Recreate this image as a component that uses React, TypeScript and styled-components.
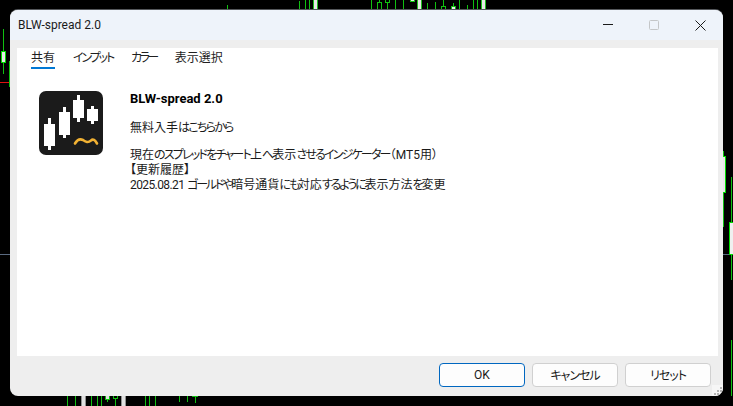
import * as React from "react";
import styled, { createGlobalStyle } from "styled-components";

const GlobalStyle = createGlobalStyle`
  html, body {
    margin: 0;
    padding: 0;
    background: #000;
    overflow: hidden;
  }
  * {
    box-sizing: border-box;
  }
`;

const fontStack = `Roboto, "Noto Sans CJK JP", sans-serif`;

const Desktop = styled.div`
  position: relative;
  width: 733px;
  height: 406px;
  background: #000;
  overflow: hidden;
  font-family: ${fontStack};
  font-feature-settings: "palt";
`;

const ChartLayer = styled.svg`
  position: absolute;
  left: 0;
  top: 0;
`;

const Window = styled.div`
  position: absolute;
  left: 10px;
  top: 10px;
  width: 713px;
  height: 386px;
  display: flex;
  flex-direction: column;
  background: #eeeeee;
  border-radius: 8px;
  overflow: hidden;
  box-shadow: 0 -1px 0 #55585c;
`;

const TitleBar = styled.div`
  height: 30px;
  flex: none;
  display: flex;
  align-items: center;
  background: #eef3fa;
  padding-left: 8px;
`;

const TitleText = styled.div`
  flex: 1;
  font-size: 12px;
  color: #1a1a1a;
`;

const WindowButton = styled.div`
  width: 46px;
  height: 30px;
  display: flex;
  align-items: center;
  justify-content: center;
`;

const Body = styled.div`
  flex: 1;
  display: flex;
  padding: 8px 5px 0 7px;
  min-height: 0;
`;

const Panel = styled.div`
  flex: 1;
  display: flex;
  flex-direction: column;
  background: #fff;
`;

const TabBar = styled.div`
  height: 22px;
  flex: none;
  display: flex;
  gap: 18px;
  padding-left: 14px;
`;

const Tab = styled.div<{ $active?: boolean }>`
  height: 21px;
  padding-top: 1px;
  font-size: 12px;
  line-height: 18px;
  color: #1f1f1f;
  border-bottom: 2px solid ${(p) => (p.$active ? "#0078d4" : "transparent")};
`;

// the kana in the reference are narrower than the kanji
const Tight = styled.span<{ $by?: number }>`
  letter-spacing: ${(p) => p.$by ?? -1.8}px;
`;

const Content = styled.div`
  flex: 1;
  display: flex;
  gap: 27px;
  padding: 21px 0 0 22px;
`;

const IconBox = styled.div`
  width: 64px;
  height: 64px;
  flex: none;
`;

const Info = styled.div`
  display: flex;
  flex-direction: column;
`;

const AppName = styled.div`
  font-size: 13px;
  font-weight: 700;
  line-height: 16px;
  color: #000;
  margin-bottom: 14px;
`;

const Line = styled.div<{ $gap?: number }>`
  font-size: 12px;
  line-height: 15px;
  color: #1a1a1a;
  margin-bottom: ${(p) => p.$gap ?? 0}px;
  white-space: nowrap;
`;

const Footer = styled.div`
  position: relative;
  height: 40px;
  flex: none;
  display: flex;
  justify-content: flex-end;
  gap: 7px;
  padding: 7px 12px 0 0;
`;

const Button = styled.button<{ $primary?: boolean }>`
  width: 86px;
  height: 24px;
  padding: 0 0 1px;
  font-family: ${fontStack};
  font-feature-settings: "palt";
  font-size: 12px;
  color: #1a1a1a;
  background: #fdfdfd;
  border-radius: 4px;
  border: ${(p) => (p.$primary ? "1.5px solid #0067c0" : "1px solid #d0d0d0")};
`;

const Grip = styled.svg`
  position: absolute;
  right: 0;
  bottom: 0;
`;

// candles behind the dialog: x, y, w, h, fill
const chartBars: [number, number, number, number, string][] = [
  [3, 29, 1, 45, "#10c010"],
  [1, 51, 5, 12, "#00e000"],
  [2, 52, 3, 10, "#e8e8e8"],
  [0, 82, 10, 1, "#e01010"],
  [9, 61, 1, 26, "#10c010"],
  [0, 254, 10, 1, "#5a6a80"],
  [227, 5, 1, 5, "#10c010"],
  [299, 1, 1, 9, "#10c010"],
  [305, 0, 1, 10, "#10c010"],
  [309, 0, 1, 10, "#10c010"],
  [313, 0, 5, 10, "#20c020"],
  [314, 0, 3, 10, "#e8e8e8"],
  [371, 0, 1, 10, "#10c010"],
  [379, 0, 1, 2, "#10c010"],
  [377, 2, 5, 8, "#10c010"],
  [378, 3, 3, 7, "#000"],
  [387, 0, 1, 9, "#10c010"],
  [385, 0, 5, 3, "#10c010"],
  [386, 0, 3, 2, "#000"],
  [395, 0, 1, 10, "#10c010"],
  [403, 0, 1, 10, "#10c010"],
  [410, 0, 5, 2, "#10c010"],
  [411, 0, 3, 1, "#e8e8e8"],
  [417, 0, 5, 10, "#20c020"],
  [418, 0, 3, 10, "#e8e8e8"],
  [427, 3, 1, 7, "#10c010"],
  [435, 2, 1, 8, "#10c010"],
  [443, 0, 1, 6, "#10c010"],
  [441, 6, 5, 4, "#10c010"],
  [442, 7, 3, 3, "#000"],
  [451, 6, 5, 4, "#10c010"],
  [452, 7, 3, 3, "#e8e8e8"],
  [453, 3, 1, 3, "#10c010"],
  [459, 0, 1, 10, "#10c010"],
  [467, 5, 1, 5, "#10c010"],
  [473, 0, 1, 10, "#10c010"],
  [477, 0, 1, 10, "#10c010"],
  [481, 0, 5, 10, "#20c020"],
  [482, 0, 3, 10, "#e8e8e8"],
  [67, 396, 1, 10, "#10c010"],
  [75, 396, 1, 10, "#10c010"],
  [81, 396, 5, 10, "#909090"],
  [82, 396, 3, 10, "#e0e0e0"],
  [91, 396, 1, 10, "#10c010"],
  [97, 396, 1, 10, "#10c010"],
  [101, 396, 1, 10, "#10c010"],
  [107, 396, 1, 6, "#10c010"],
  [105, 396, 5, 4, "#10c010"],
  [106, 396, 3, 3, "#e0e0e0"],
  [115, 396, 1, 10, "#10c010"],
  [113, 396, 5, 3, "#10c010"],
  [114, 396, 3, 2, "#000"],
  [121, 396, 5, 10, "#909090"],
  [122, 396, 3, 10, "#e0e0e0"],
  [145, 396, 1, 10, "#10c010"],
  [149, 396, 1, 10, "#10c010"],
  [155, 396, 1, 10, "#10c010"],
  [179, 396, 1, 6, "#10c010"],
  [187, 396, 1, 6, "#10c010"],
  [195, 396, 1, 7, "#10c010"],
  [192, 396, 6, 1, "#10c010"],
  [723, 151, 1, 76, "#10c010"],
  [723, 156, 3, 37, "#00e000"],
  [723, 157, 2, 35, "#e8e8e8"],
  [731, 177, 1, 103, "#10c010"],
  [729, 222, 4, 33, "#00e000"],
  [730, 223, 3, 31, "#f0f0f0"],
  [723, 254, 6, 1, "#5a6a80"],
  [731, 340, 1, 56, "#10c010"],
];

const LogoIcon = () => (
  <svg width="64" height="64" viewBox="0 0 64 64">
    <rect width="64" height="64" rx="7" fill="#1b1b1b" />
    <g fill="#fff">
      <rect x="5" y="33" width="11" height="22" />
      <rect x="9" y="27" width="3" height="32" />
      <rect x="20" y="21" width="11" height="23" />
      <rect x="24" y="16" width="3" height="31" />
      <rect x="34" y="9" width="11" height="18" />
      <rect x="38" y="4" width="3" height="27" />
      <rect x="48" y="18" width="11" height="12" />
      <rect x="52" y="15" width="3" height="18" />
    </g>
    <path
      d="M36 52.5 C38 49 41 47.5 44 49 C47 51 49 52 52 49.5 C54 47.5 56 49 58 52.5"
      fill="none"
      stroke="#f2b233"
      strokeWidth="2.6"
      strokeLinecap="round"
    />
  </svg>
);

const App = () => {
  return (
    <Desktop>
      <GlobalStyle />
      <ChartLayer width="733" height="406">
        {chartBars.map(([x, y, w, h, fill], i) => (
          <rect key={i} x={x} y={y} width={w} height={h} fill={fill} />
        ))}
      </ChartLayer>
      <Window>
        <TitleBar>
          <TitleText>BLW-spread 2.0</TitleText>
          <WindowButton>
            <svg width="10" height="10" viewBox="0 0 10 10">
              <path d="M0 4.5H10" stroke="#1a1a1a" strokeWidth="1" />
            </svg>
          </WindowButton>
          <WindowButton>
            <svg width="10" height="10" viewBox="0 0 10 10">
              <rect x="0.5" y="0.5" width="9" height="9" rx="1" fill="none" stroke="#c4c6c8" />
            </svg>
          </WindowButton>
          <WindowButton>
            <svg width="11" height="11" viewBox="0 0 11 11">
              <path d="M0.5 0.5L10.5 10.5M10.5 0.5L0.5 10.5" stroke="#1a1a1a" strokeWidth="1" />
            </svg>
          </WindowButton>
        </TitleBar>
        <Body>
          <Panel>
            <TabBar>
              <Tab $active>共有</Tab>
              <Tab>
                <Tight $by={-2.1}>インプット</Tight>
              </Tab>
              <Tab>
                <Tight $by={-2.6}>カラー</Tight>
              </Tab>
              <Tab>表示選択</Tab>
            </TabBar>
            <Content>
              <IconBox>
                <LogoIcon />
              </IconBox>
              <Info>
                <AppName>BLW-spread 2.0</AppName>
                <Line $gap={12}>
                  無料入手<Tight>はこちらから</Tight>
                </Line>
                <Line>
                  現在<Tight>のスプレッドをチャート</Tight>上<Tight>へ</Tight>表示
                  <Tight>させるインジケーター</Tight>（MT5用）
                </Line>
                <Line>【更新履歴】</Line>
                <Line>
                  <Tight $by={-0.6}>2025.08.21</Tight> <Tight $by={-2.2}>ゴールドや</Tight>暗号通貨
                  <Tight $by={-2.2}>にも</Tight>対応<Tight $by={-2.2}>するように</Tight>表示方法
                  <Tight $by={-2.2}>を</Tight>変更
                </Line>
              </Info>
            </Content>
          </Panel>
        </Body>
        <Footer>
          <Button $primary>OK</Button>
          <Button>
            <Tight $by={-1}>キャンセル</Tight>
          </Button>
          <Button>
            <Tight $by={-1}>リセット</Tight>
          </Button>
          <Grip width="11" height="11" viewBox="0 0 11 11">
            <rect width="11" height="11" fill="#f6f6f6" />
            <g fill="#b4b4b4">
              <rect x="8" y="2" width="2" height="2" />
              <rect x="5" y="5" width="2" height="2" />
              <rect x="8" y="5" width="2" height="2" />
              <rect x="2" y="8" width="2" height="2" />
              <rect x="5" y="8" width="2" height="2" />
              <rect x="8" y="8" width="2" height="2" />
            </g>
          </Grip>
        </Footer>
      </Window>
    </Desktop>
  );
};

export default App;
